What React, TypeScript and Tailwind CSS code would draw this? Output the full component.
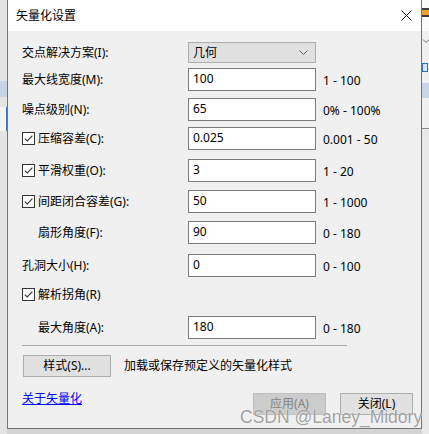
import React from 'react'

const ui = "font-['Noto_Sans','Noto_Sans_CJK_SC',sans-serif]"

function Check() {
  return (
    <span className="w-[13px] h-[13px] border border-[#333333] bg-white flex items-center justify-center shrink-0">
      <svg width="11" height="11" viewBox="0 0 11 11">
        <path d="M1.8 5.6 L4.2 8 L9.4 2.6" fill="none" stroke="#333333" strokeWidth="1.1" />
      </svg>
    </span>
  )
}

interface FieldRowProps {
  label: string
  value: string
  range: string
  checked?: boolean
  indent?: boolean
  className: string
}

function FieldRow({ label, value, range, checked, indent, className }: FieldRowProps) {
  return (
    <div className={`flex items-center ${className}`}>
      <div className={`w-[166px] flex items-center ${indent ? 'pl-[16px]' : ''}`}>
        {checked && <Check />}
        <span className={checked ? 'ml-[3px]' : ''}>{label}</span>
      </div>
      <div className="w-[128px] h-[23px] border border-[#7a7a7a] bg-white pl-[4px] flex items-center pb-[2px]">
        {value}
      </div>
      <span className="ml-[7px] pt-[2px]">{range}</span>
    </div>
  )
}

function LeftStrip() {
  return (
    <div className="w-[7px] h-full flex flex-col bg-[#e4e4e4]">
      <div className="h-[81px]" />
      <div className="h-[16px] bg-[#c6d3e2]" />
      <div className="h-[10px]" />
      <div className="h-[24px] border-r border-[#3c78c8] bg-[#f4f4f4]" />
      <div className="flex-1" />
    </div>
  )
}

function RightStrip() {
  return (
    <div className="w-[7px] h-full flex flex-col bg-[#ebebeb]">
      <div className="h-[31px] bg-[#fbfbfb] flex items-start pt-[8px]">
        <div className="w-full h-[9px] border-y-2 border-[#3b3b3b] bg-[#f0a030]" />
      </div>
      <div className="h-[20px] bg-[#f0f0f0] flex items-center">
        <svg width="7" height="6" viewBox="0 0 7 6">
          <path d="M1 1.5 L4 4.5 L7 1.5" fill="none" stroke="#777777" strokeWidth="1" />
        </svg>
      </div>
      <div className="h-[32px] bg-[#f0f0f0] flex items-center">
        <div className="w-[6px] h-[9px] border border-[#2f6fb8] bg-[#dbe7f5]" />
      </div>
      <div className="h-[15px] bg-[#c9d6e5]" />
      <div className="h-[30px] bg-[#f0f0f0]" />
      <div className="h-px bg-[#8a8a8a]" />
      <div className="flex-1 bg-[#e8e8e8]" />
    </div>
  )
}

export default function App() {
  return (
    <div className={`relative w-[429px] h-[434px] overflow-hidden flex bg-[#dcdcdc] text-[12px] text-black ${ui}`}>
      <LeftStrip />

      <div className="w-[415px] h-full flex flex-col">
        <div className="h-[429px] flex flex-col border-x border-b border-[#737373] bg-[#f0f0f0]">
          {/* Title bar */}
          <div className="h-[31px] shrink-0 bg-white flex items-center justify-between pl-[8px] pr-[9px]">
            <span className="text-[12px]">矢量化设置</span>
            <svg width="11" height="11" viewBox="0 0 11 11">
              <path d="M0.5 0.5 L10.5 10.5 M10.5 0.5 L0.5 10.5" stroke="#1a1a1a" strokeWidth="1" />
            </svg>
          </div>

          {/* Body */}
          <div className="flex flex-col pl-[14px] pr-[8px]">
            <div className="flex items-center mt-[11px]">
              <span className="w-[166px]">交点解决方案(I):</span>
              <div className="w-[128px] h-[21px] border border-[#adadad] bg-[#e1e1e1] flex items-center justify-between pl-[4px] pr-[7px]">
                <span>几何</span>
                <svg width="9" height="5" viewBox="0 0 9 5">
                  <path d="M0.5 0.5 L4.5 4.5 L8.5 0.5" fill="none" stroke="#606060" strokeWidth="1" />
                </svg>
              </div>
            </div>

            <FieldRow className="mt-[5px]" label="最大线宽度(M):" value="100" range="1 - 100" />
            <FieldRow className="mt-[7px]" label="噪点级别(N):" value="65" range="0% - 100%" />
            <FieldRow className="mt-[6px]" checked label="压缩容差(C):" value="0.025" range="0.001 - 50" />
            <FieldRow className="mt-[9px]" checked label="平滑权重(O):" value="3" range="1 - 20" />
            <FieldRow className="mt-[8px]" checked label="间距闭合容差(G):" value="50" range="1 - 1000" />
            <FieldRow className="mt-[8px]" indent label="扇形角度(F):" value="90" range="0 - 180" />
            <FieldRow className="mt-[10px]" label="孔洞大小(H):" value="0" range="0 - 100" />

            <div className="h-[23px] mt-[6px] flex items-center">
              <Check />
              <span className="ml-[3px]">解析拐角(R)</span>
            </div>

            <FieldRow className="mt-[10px]" indent label="最大角度(A):" value="180" range="0 - 180" />

            <div className="w-[325px] h-px bg-[#a9a9a9] mt-[6px]" />

            <div className="flex items-center mt-[9px]">
              <button className="w-[88px] h-[22px] ml-px border border-[#adadad] bg-[#e1e1e1] flex items-center justify-center">
                样式(S)...
              </button>
              <span className="ml-[13px]">加载或保存预定义的矢量化样式</span>
            </div>

            <div className="flex items-start mt-[14px]">
              <a className="text-[#0000ff] underline leading-[16px]">关于矢量化</a>
              <div className="flex-1" />
              <button className="w-[73px] h-[22px] mt-[2px] border border-[#bfbfbf] bg-[#cccccc] text-[#838383] flex items-center justify-center">
                应用(A)
              </button>
              <button className="w-[73px] h-[22px] mt-[2px] ml-[14px] border border-[#adadad] bg-[#e1e1e1] flex items-center justify-center">
                关闭(L)
              </button>
            </div>
          </div>
        </div>
        <div className="flex-1 bg-[#d4d4d4]" />
      </div>

      <RightStrip />

      {/* Watermark */}
      <span className="absolute left-[240px] top-[405px] leading-[24px] text-[17.5px] font-['Liberation_Sans',sans-serif] text-[#8f8f8f]/85 [text-shadow:0_0_1px_#ffffff]">
        CSDN @Laney_Midory
      </span>
    </div>
  )
}
